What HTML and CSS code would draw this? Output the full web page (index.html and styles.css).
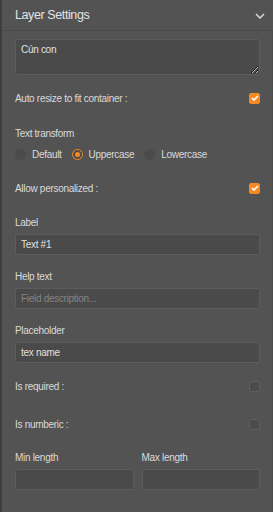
FILE: index.html
```html
<!DOCTYPE html>
<html lang="en">
<head>
    <meta charset="UTF-8">
    <meta name="viewport" content="width=device-width, initial-scale=1.0">
    <title>Layer Settings</title>
    <link rel="stylesheet" href="styles.css">
</head>
<body>
    <div class="panel">
        <div class="panel-header">
            <span class="panel-title">Layer Settings</span>
            <svg class="chevron" width="10" height="6" viewBox="0 0 10 6">
                <path d="M1 1 L5 5 L9 1" fill="none" stroke="#d8d8d8" stroke-width="1.5"/>
            </svg>
        </div>

        <div class="panel-body">
            <textarea class="field textarea">Cún con</textarea>

            <div class="check-row first">
                <span>Auto resize to fit container :</span>
                <span class="checkbox checked">
                    <svg width="8" height="6" viewBox="0 0 8 6"><path d="M1 3 L3 5 L7 1" fill="none" stroke="#fff" stroke-width="1.6"/></svg>
                </span>
            </div>

            <div class="label transform-label">Text transform</div>
            <div class="radios">
                <span class="radio-item"><span class="radio"></span>Default</span>
                <span class="radio-item"><span class="radio selected"></span>Uppercase</span>
                <span class="radio-item"><span class="radio"></span>Lowercase</span>
            </div>

            <div class="check-row personal">
                <span>Allow personalized :</span>
                <span class="checkbox checked">
                    <svg width="8" height="6" viewBox="0 0 8 6"><path d="M1 3 L3 5 L7 1" fill="none" stroke="#fff" stroke-width="1.6"/></svg>
                </span>
            </div>

            <div class="label group-label">Label</div>
            <input class="field" type="text" value="Text #1">

            <div class="label">Help text</div>
            <input class="field" type="text" placeholder="Field description...">

            <div class="label">Placeholder</div>
            <input class="field" type="text" value="tex name">

            <div class="check-row required">
                <span>Is required :</span>
                <span class="checkbox"></span>
            </div>

            <div class="check-row numeric">
                <span>Is numberic :</span>
                <span class="checkbox"></span>
            </div>

            <div class="lengths">
                <div class="length-col">
                    <div class="label">Min length</div>
                    <input class="field" type="text">
                </div>
                <div class="length-col">
                    <div class="label">Max length</div>
                    <input class="field" type="text">
                </div>
            </div>
        </div>
    </div>
</body>
</html>
```

FILE: styles.css
```css
body {
    margin: 0;
    background-color: #525252;
    font-family: "Liberation Sans", Arial, sans-serif;
    color: #dadada;
}
.panel {
    width: 271px;
    height: 512px;
    border-left: 2px solid #3e3e3e;
    background-color: #535353;
}
.panel-header {
    height: 30px;
    display: flex;
    align-items: center;
    justify-content: space-between;
    padding: 0 8px 0 13px;
    border-bottom: 1px solid #4a4a4a;
}
.panel-title {
    font-size: 12.5px;
    letter-spacing: -0.4px;
    color: #e4e4e4;
}
.chevron {
    margin-top: 2px;
}
.panel-body {
    padding: 8px 12px 0 13px;
    border-right: 1px solid #4c4c4c;
    height: 473px;
    font-size: 10px;
    letter-spacing: -0.3px;
}
.field {
    display: block;
    box-sizing: border-box;
    width: 100%;
    height: 21px;
    margin: 0;
    padding: 0 5px;
    background-color: #4a4a4a;
    border: 1px solid #5c5c5c;
    border-radius: 2px;
    color: #e0e0e0;
    font-family: inherit;
    font-size: 10px;
    letter-spacing: -0.3px;
    outline: none;
}
.field::placeholder {
    color: #858585;
}
.textarea {
    height: 36px;
    padding: 4px 5px;
    resize: vertical;
}
.check-row {
    display: flex;
    align-items: center;
    justify-content: space-between;
    height: 18px;
}
.check-row.first {
    margin-top: 14px;
}
.check-row.personal {
    margin-top: 18px;
}
.check-row.required {
    margin-top: 14px;
}
.check-row.numeric {
    margin-top: 20px;
}
.checkbox {
    width: 11px;
    height: 11px;
    box-sizing: border-box;
    border: 1px solid #5e5e5e;
    background-color: #4c4c4c;
    border-radius: 2px;
    display: flex;
    align-items: center;
    justify-content: center;
}
.checkbox.checked {
    background-color: #f38a26;
    border-color: #f38a26;
}
.label {
    margin: 15px 0 5px;
    height: 13px;
    line-height: 13px;
}
.transform-label {
    margin-top: 20px;
    margin-bottom: 8px;
}
.group-label {
    margin-top: 19px;
}
.radios {
    display: flex;
    align-items: center;
    gap: 10px;
    height: 13px;
}
.radio-item {
    display: flex;
    align-items: center;
    gap: 6px;
}
.radio {
    width: 11px;
    height: 11px;
    box-sizing: border-box;
    border-radius: 50%;
    background-color: #4b4b4b;
    display: flex;
    align-items: center;
    justify-content: center;
}
.radio.selected {
    border: 1px solid #f38a26;
    background-color: #4b4b4b;
}
.radio.selected::after {
    content: "";
    width: 5px;
    height: 5px;
    border-radius: 50%;
    background-color: #f38a26;
}
.lengths {
    display: flex;
    gap: 8px;
}
.length-col {
    flex: 1;
}
.length-col .label {
    margin-top: 18px;
}
```
